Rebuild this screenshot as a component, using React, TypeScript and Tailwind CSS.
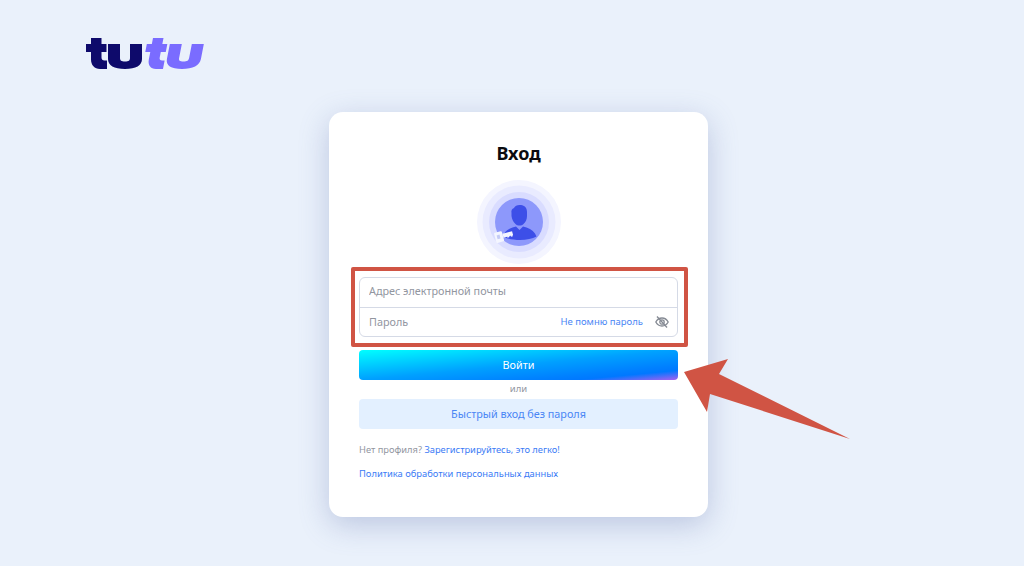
import { useState } from "react";

const LetterT = () => (
    <path d="M5 0h10.500v6h5v8h-5v5.500c0 2 1 3 3 3h2.500V31h-7C8.500 31 5 27 5 21.500V14H0V6h5z" />
);

const LetterU = () => (
    <path d="M0 6h12v14c0 2.500 1.200 3.500 5 3.500s5-1 5-3.500V6h12v15c0 6.500-6 10-17 10S0 27.500 0 21z" />
);

const Logo = () => (
    <svg width="118" height="31" viewBox="0 0 118 31">
        <g fill="#0e0a6b">
            <LetterT />
            <g transform="translate(22 0)">
                <LetterU />
            </g>
        </g>
        <g fill="#7a6cff">
            <g transform="translate(62 0) skewX(-11)">
                <LetterT />
            </g>
            <g transform="translate(85 0) skewX(-11)">
                <LetterU />
            </g>
        </g>
    </svg>
);

const AvatarBadge = () => (
    <svg width="84" height="84" viewBox="0 0 84 84">
        <circle cx="42" cy="42" r="42" fill="#f4f5ff" />
        <circle cx="42" cy="42" r="36.500" fill="#e9ebff" />
        <circle cx="42" cy="42" r="30" fill="#d9dcff" />
        <circle cx="42" cy="42" r="24" fill="#8d98fb" />
        <path
            fill="#3d4fe8"
            d="M34.500 33c-.5-2.500.5-4.500 2.500-5 1-2.500 4-3.500 7-3 3.500.5 6 2.500 6 7v4c0 3.500-1.500 6.500-3.500 8-1 1-2.500 1.500-4 1.500s-3-.5-4-1.500c-2-1.500-3.500-4.500-4-8z"
        />
        <path
            fill="#3d4fe8"
            d="M26 57c1-5 4.500-8 9.500-9.500l3.500-1 3.500 3.500 3.500-3.500 3.500 1c5 1.500 8.500 4.500 10 9-4 2-10 3.500-16.500 3.500-6 0-12-1-16-3z"
        />
        <g transform="rotate(-15 27 56)" fill="#f4f6ff">
            <rect x="18" y="50.500" width="8" height="10.500" rx="1" />
            <rect x="26" y="53.500" width="10" height="4" />
            <rect x="30" y="57" width="2" height="1.500" />
            <rect x="33.500" y="57" width="2" height="1.500" />
            <rect x="20" y="53.500" width="3" height="4" fill="#c4cbf5" />
        </g>
    </svg>
);

const EyeSlash = () => (
    <svg width="14" height="14" viewBox="0 0 14 14" fill="none" stroke="#858a93" strokeWidth="1.300">
        <path d="M.8 7C2.300 4.300 4.500 3 7 3s4.700 1.300 6.200 4c-1.500 2.700-3.700 4-6.200 4S2.300 9.700.8 7z" />
        <circle cx="7" cy="7" r="2.200" />
        <path d="M2 1.500L12 12.500" />
    </svg>
);

// red annotation arrow pointing at the login button
const Arrow = () => (
    <svg className="absolute left-[680px] top-[355px]" width="175" height="90" viewBox="0 0 175 90">
        <path fill="#d05444" d="M4 17L48 4L39 19L170 84L30 39L27 57z" />
    </svg>
);

export default function App() {
    const [email, setEmail] = useState("");
    const [password, setPassword] = useState("");

    return (
        <div className="relative w-[1024px] h-[566px] overflow-hidden bg-[#eaf1fb] font-['Noto_Sans','Open_Sans',sans-serif]">
            <div className="pl-[86px] pt-[38px] h-[112px]">
                <Logo />
            </div>
            <div className="ml-[329px] w-[379px] h-[405px] bg-white rounded-[14px] px-[30px] pt-[29px] shadow-[0_8px_30px_rgba(90,110,170,0.32)]">
                <h1 className="text-[18px] leading-[24px] font-bold text-[#0b0b0f] text-center">Вход</h1>
                <div className="flex justify-center mt-[15px]">
                    <AvatarBadge />
                </div>
                <div className="mt-[13px] h-[60px] border border-[#d5dae6] rounded-[6px] flex flex-col">
                    <div className="h-[30px] border-b border-[#d5dae6] px-[9px] flex items-center pb-[3px]">
                        <input
                            className="w-full outline-none text-[10.800px] text-[#333] placeholder:text-[#92969f]"
                            placeholder="Адрес электронной почты"
                            value={email}
                            onChange={(evt) => setEmail(evt.target.value)}
                        />
                    </div>
                    <div className="flex-1 pl-[9px] pr-[8px] flex items-center">
                        <input
                            className="flex-1 min-w-0 outline-none text-[10.800px] text-[#333] placeholder:text-[#92969f]"
                            placeholder="Пароль"
                            type="password"
                            value={password}
                            onChange={(evt) => setPassword(evt.target.value)}
                        />
                        <a className="text-[9.500px] text-[#4a86f5] mr-[12px] whitespace-nowrap">Не помню пароль</a>
                        <EyeSlash />
                    </div>
                </div>
                <button className="mt-[13px] w-full h-[30px] rounded-[4px] text-white text-[10.800px] bg-[linear-gradient(to_bottom_right,#00ffff_0%,#00a0ff_50%,#0080ff_76%,#0078ff_84%,#a860f0_100%)]">
                    Войти
                </button>
                <div className="text-center text-[9.500px] leading-[19px] text-[#92969f] pb-[2px] h-[19px] -translate-y-[1px]">или</div>
                <button className="w-full h-[30px] rounded-[4px] bg-[#e3f0ff] text-[#4a86f5] text-[10.800px]">
                    Быстрый вход без пароля
                </button>
                <p className="mt-[13px] text-[9.300px] leading-[16px] text-[#92969f]">
                    Нет профиля? <a className="text-[#3b7bf6]">Зарегистрируйтесь, это легко!</a>
                </p>
                <p className="mt-[8px] text-[9.350px] leading-[16px] text-[#3b7bf6]">
                    <a>Политика обработки персональных данных</a>
                </p>
            </div>
            {/* annotation frame */}
            <div className="absolute left-[351px] top-[267px] w-[337px] h-[80px] border-[4px] border-[#d05444] rounded-[2px]" />
            <Arrow />
        </div>
    );
}
